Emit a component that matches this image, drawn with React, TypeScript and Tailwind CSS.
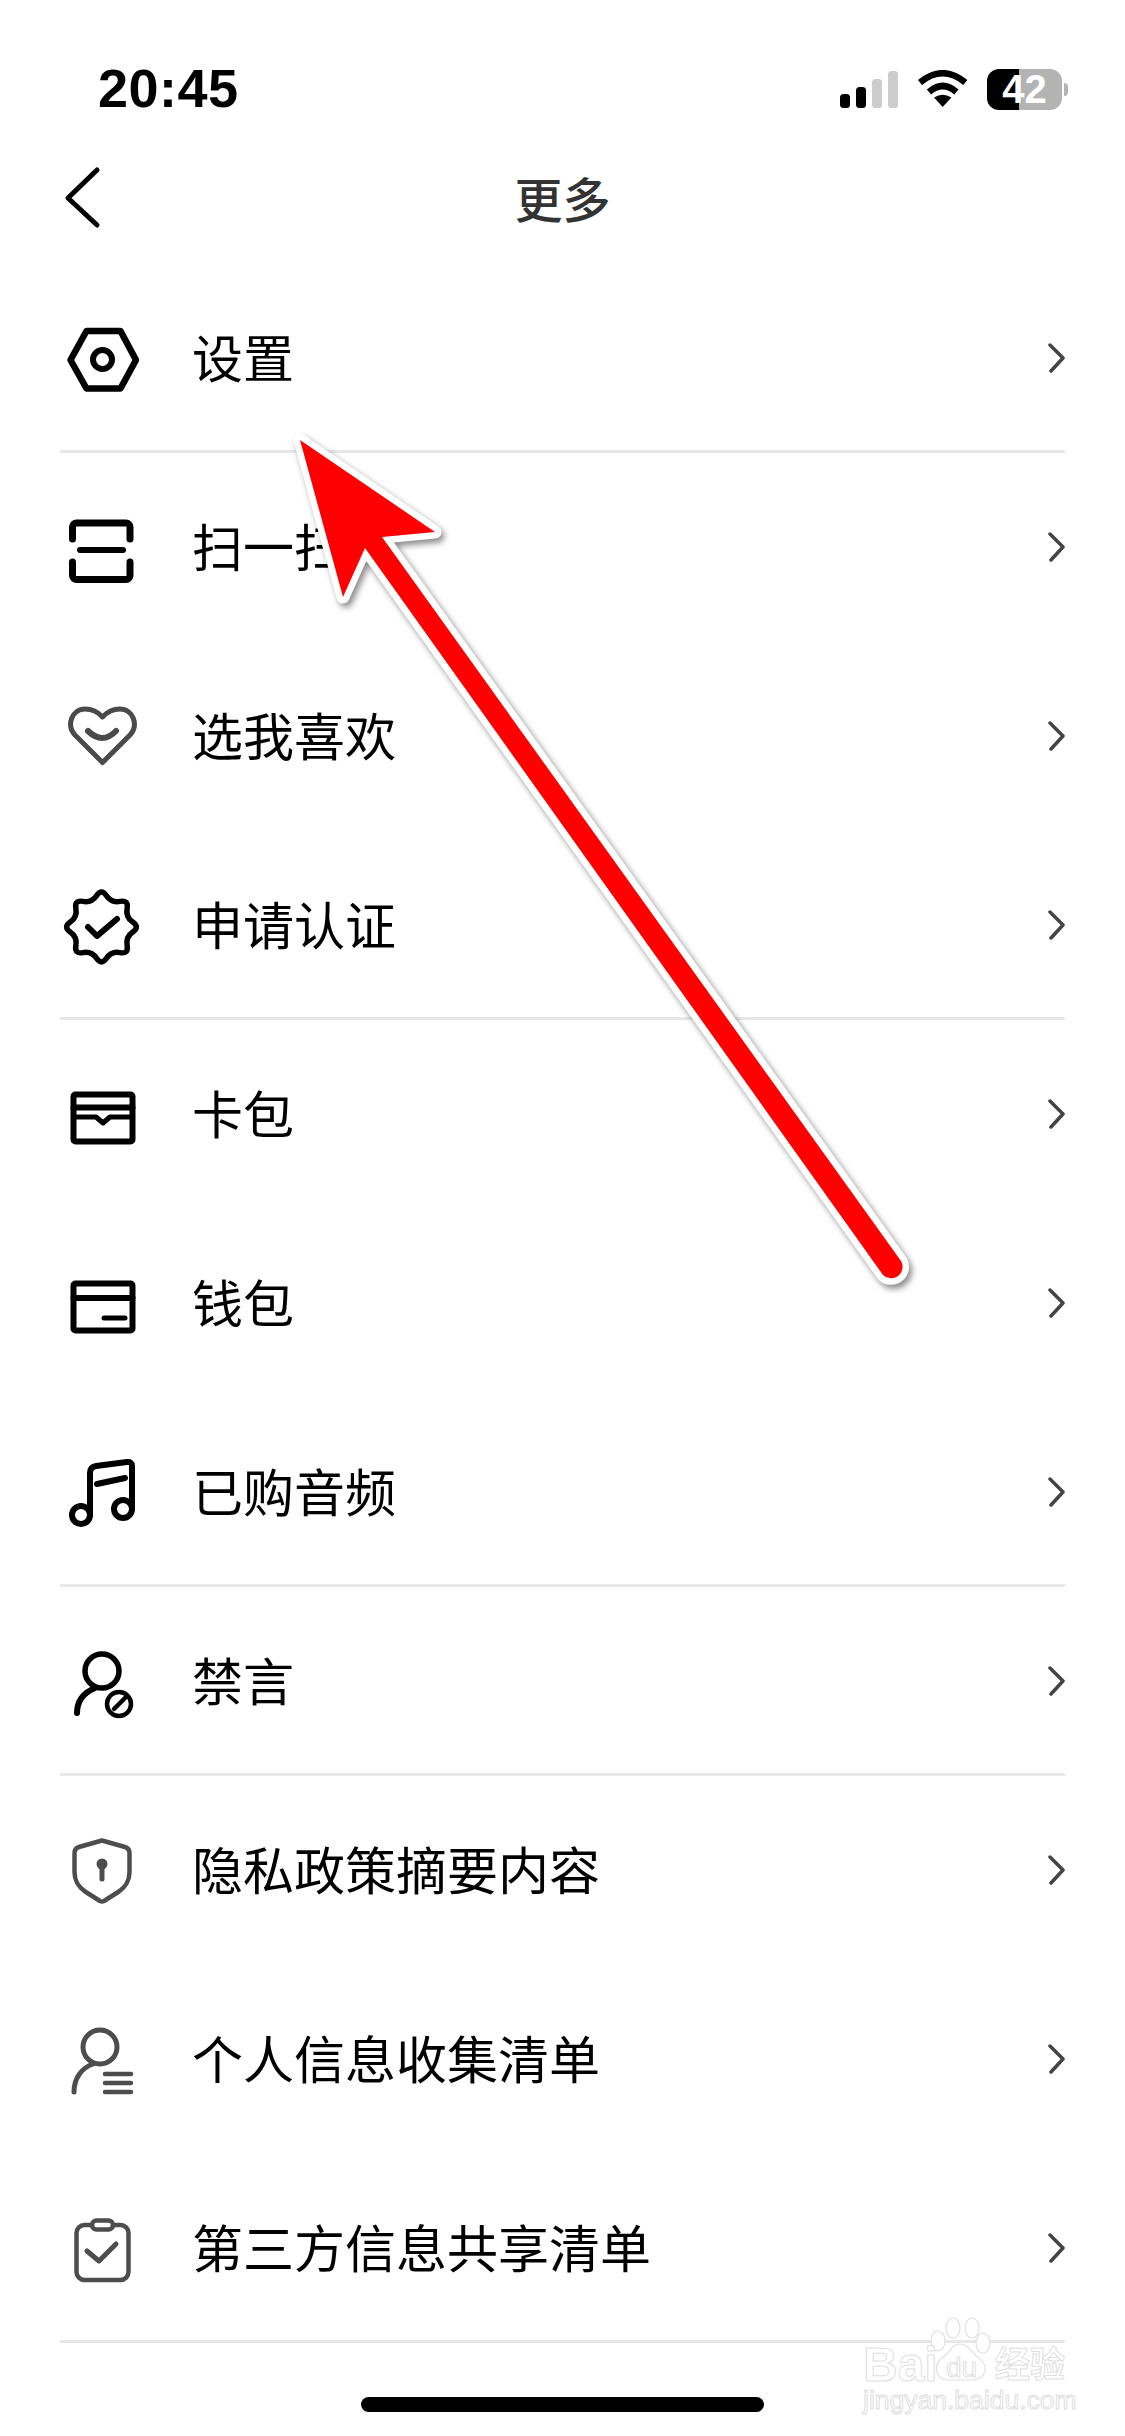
import React from "react";

const cjk = { fontFamily: '"Noto Sans CJK SC", "Noto Sans", sans-serif' };

function badgePath() {
  const cx = 38.5, cy = 40;
  const pts: [number, number][] = [];
  for (let i = 0; i < 16; i++) {
    const a = (i * Math.PI) / 8 - Math.PI / 2;
    const r = i % 2 === 0 ? 38.5 : 26;
    pts.push([cx + r * Math.cos(a), cy + r * Math.sin(a)]);
  }
  const mid = (p: [number, number], q: [number, number]) => [(p[0] + q[0]) / 2, (p[1] + q[1]) / 2];
  const start = mid(pts[15], pts[0]);
  let d = `M${start[0].toFixed(2)} ${start[1].toFixed(2)}`;
  for (let i = 0; i < 16; i++) {
    const m = mid(pts[i], pts[(i + 1) % 16]);
    d += ` Q${pts[i][0].toFixed(2)} ${pts[i][1].toFixed(2)} ${m[0].toFixed(2)} ${m[1].toFixed(2)}`;
  }
  return d + " Z";
}

function Ico({ children, color = "#000", sw = 5.5 }: { children: React.ReactNode; color?: string; sw?: number }) {
  return (
    <svg
      viewBox="0 0 80 80"
      className="w-[80px] h-[80px] shrink-0"
      fill="none"
      stroke={color}
      strokeWidth={sw}
      strokeLinecap="round"
      strokeLinejoin="round"
    >
      {children}
    </svg>
  );
}

const icons: Record<string, React.ReactNode> = {
  hex: (
    <Ico sw={6.5}>
      <path d="M7.5 40 L23.5 11 H57.5 L73 40 L57.5 68.5 H23.5 Z" />
      <circle cx="39.5" cy="39.5" r="9.5" strokeWidth={6} />
    </Ico>
  ),
  scan: (
    <Ico sw={7}>
      <path d="M9.5 30 V18 a4 4 0 0 1 4-4 H63 a4 4 0 0 1 4 4 V30" />
      <path d="M9.5 53 V66.5 a4 4 0 0 0 4 4 H63 a4 4 0 0 0 4-4 V53" />
      <path d="M17 41 H60" strokeWidth={6} />
    </Ico>
  ),
  heart: (
    <Ico color="#4a4a4a" sw={5}>
      <path d="M39.5 64.5 L12 37 C3 27 9 11 22 11 C29 11 35 14 39.5 19 C44 14 50 11 57 11 C70 11 76 27 67 37 Z" />
      <path d="M25 33 Q39.5 47 53 33" strokeWidth={6} />
    </Ico>
  ),
  badge: (
    <Ico sw={5.5}>
      <path d={badgePath()} />
      <path d="M25 40 L34 49 L54 32" strokeWidth={6} />
    </Ico>
  ),
  card: (
    <Ico sw={6}>
      <rect x="10.5" y="18.5" width="59" height="47" rx="2" />
      <path d="M10.5 31.5 H69.5" />
      <path d="M10.5 41 H33 L40 47 L47 41 H69.5" strokeWidth={5} />
    </Ico>
  ),
  wallet: (
    <Ico sw={6}>
      <rect x="10.5" y="18.5" width="59" height="47" rx="2" />
      <path d="M10.5 33 H69.5" />
      <path d="M41 53 H62" strokeWidth={5} />
    </Ico>
  ),
  music: (
    <Ico sw={6}>
      <circle cx="18" cy="61" r="9" />
      <circle cx="60" cy="55" r="9" />
      <path d="M27 61 V19 q0 -6 6 -7 L64 8 q5 -0.5 5 4 V55" />
      <path d="M34 30 L62 24" />
    </Ico>
  ),
  ban: (
    <Ico sw={5.5}>
      <circle cx="39" cy="28" r="17" />
      <path d="M14 70 C14 58 20 50 32 45" strokeWidth={6} />
      <circle cx="56" cy="61" r="12" strokeWidth={4.5} />
      <path d="M51 66 L62 55" strokeWidth={4.5} />
    </Ico>
  ),
  shield: (
    <Ico color="#4d4d4d" sw={4.5}>
      <path d="M39 8.5 L62 15 q4.5 1.5 4.5 6 V40 C66.5 50 62 55 56 59.5 L41 69 q-2 1 -4 0 L22 59.5 C16 55 11.5 50 11.5 40 V21 q0 -4.5 4.5 -6 Z" />
      <circle cx="39" cy="32" r="5.5" fill="#4d4d4d" stroke="none" />
      <path d="M39 34 V47" strokeWidth={5} />
    </Ico>
  ),
  list: (
    <Ico color="#4d4d4d" sw={5}>
      <circle cx="37" cy="26" r="17" />
      <path d="M11 71 C11 58 18 47 30 43" />
      <path d="M42 53 H68" strokeWidth={4.5} />
      <path d="M42 62 H68" strokeWidth={4.5} />
      <path d="M42 71 H68" strokeWidth={4.5} />
    </Ico>
  ),
  clip: (
    <Ico color="#4d4d4d" sw={4.5}>
      <rect x="13.5" y="15" width="52" height="55" rx="8" />
      <rect x="29" y="10.5" width="21" height="9" rx="4.5" fill="#fff" />
      <path d="M24 41 L36 51 L53 34" strokeWidth={5} />
    </Ico>
  ),
};

const rows: { icon: string; label: string; line?: boolean }[] = [
  { icon: "hex", label: "设置", line: true },
  { icon: "scan", label: "扫一扫" },
  { icon: "heart", label: "选我喜欢" },
  { icon: "badge", label: "申请认证", line: true },
  { icon: "card", label: "卡包" },
  { icon: "wallet", label: "钱包" },
  { icon: "music", label: "已购音频", line: true },
  { icon: "ban", label: "禁言", line: true },
  { icon: "shield", label: "隐私政策摘要内容" },
  { icon: "list", label: "个人信息收集清单" },
  { icon: "clip", label: "第三方信息共享清单", line: true },
];

function Row({ icon, label, line }: { icon: string; label: string; line?: boolean }) {
  return (
    <div
      className={`mx-[60px] h-[189px] box-border pt-[6px] pl-[3px] flex items-center gap-[49px] border-b-[3px] ${
        line ? "border-[#e8e8e8]" : "border-transparent"
      }`}
    >
      {icons[icon]}
      <span className="text-[51px] leading-none text-black mb-[7px]" style={cjk}>
        {label}
      </span>
      <svg viewBox="0 0 20 34" className="w-[20px] h-[34px] ml-auto -mt-[3px]" fill="none" stroke="#444" strokeWidth={3.5} strokeLinecap="round" strokeLinejoin="round">
        <path d="M5 3 L18 16 L6 29" />
      </svg>
    </div>
  );
}

function Watermark() {
  const stroke = "text-white [-webkit-text-stroke:1px_#e0e0e0]";
  return (
    <div className="absolute left-[863px] top-[2317px] w-[204px] h-[96px] font-['Liberation_Sans',sans-serif]">
      <svg viewBox="0 0 204 70" className="absolute left-0 top-0 w-[204px] h-[70px]" fill="#fff" stroke="#e0e0e0" strokeWidth={1.2}>
        <ellipse cx="90" cy="11" rx="7" ry="10" />
        <ellipse cx="109" cy="11" rx="7" ry="10" />
        <ellipse cx="75" cy="24" rx="7" ry="10" />
        <ellipse cx="120" cy="26" rx="7" ry="10" />
        <path d="M97 27 C106 27 108 36 116 41 C126 48 124 63 108 63 H86 C72 63 70 48 79 41 C87 36 88 27 97 27 Z" />
      </svg>
      <span className={`absolute left-0 top-[26px] text-[48px] leading-[44px] font-bold ${stroke}`}>Bai</span>
      <span className={`absolute left-[83px] top-[37px] text-[28px] leading-none ${stroke}`}>du</span>
      <span className={`absolute left-[132px] top-[27px] text-[35px] leading-none font-bold ${stroke}`} style={cjk}>
        经验
      </span>
      <span className={`absolute left-0 top-[70px] text-[26.5px] leading-none ${stroke}`}>jingyan.baidu.com</span>
    </div>
  );
}

export default function App() {
  return (
    <div className="relative w-[1125px] h-[2436px] bg-white overflow-hidden">
      <div className="h-[132px] pt-[44px] pl-[98px] pr-[57px] flex items-center justify-between">
        <span className="text-[54px] leading-none font-bold text-black tracking-[0.5px] font-['Liberation_Sans',sans-serif]">20:45</span>
        <div className="flex items-center mt-[2px]">
          <svg viewBox="0 0 58 37" className="w-[58px] h-[37px]" fill="#000">
            <rect x="0" y="23" width="10" height="14" rx="3.5" />
            <rect x="16" y="16" width="10" height="21" rx="3.5" />
            <rect x="32" y="8" width="10" height="29" rx="3.5" fill="#ccc" />
            <rect x="48" y="0" width="10" height="37" rx="3.5" fill="#ccc" />
          </svg>
          <svg viewBox="0 0 52 38" className="w-[52px] h-[38px] ml-[19px]" fill="none" stroke="#000" strokeWidth={6.5}>
            <path d="M3 12.5 Q25.7 -6 48.3 12.5" />
            <path d="M12 22 Q25.7 10 39.4 22" />
            <path d="M25.7 37 L17 27.5 Q25.7 22 34.4 27.5 Z" fill="#000" stroke="none" />
          </svg>
          <div className="ml-[18px] w-[75px] h-[41px] rounded-[12px] bg-[linear-gradient(90deg,#000_43%,#b3b3b3_43%)] flex items-center justify-center text-white text-[40px] font-bold leading-none font-['Liberation_Sans',sans-serif]">
            42
          </div>
          <div className="ml-[2px] w-[4px] h-[13px] rounded-r-full bg-[#b3b3b3]" />
        </div>
      </div>
      <div className="h-[132px] grid grid-cols-[1fr_auto_1fr] items-center">
        <svg viewBox="0 0 40 64" className="w-[40px] h-[64px] ml-[62px] -mt-[2px]" fill="none" stroke="#000" strokeWidth={5} strokeLinecap="round" strokeLinejoin="round">
          <path d="M35 5 L6 33 L35 60" />
        </svg>
        <span className="text-[48px] leading-none font-medium text-[#333] mb-[3px]" style={cjk}>
          更多
        </span>
        <span />
      </div>
      <div>
        {rows.map((r) => (
          <Row key={r.label} {...r} />
        ))}
      </div>
      <div className="mt-[54px] mx-auto w-[403px] h-[15px] rounded-full bg-black" />
      <Watermark />
      <svg viewBox="0 0 1125 2436" className="absolute inset-0 w-[1125px] h-[2436px] pointer-events-none drop-shadow-[3px_4px_3px_rgba(0,0,0,0.45)]">
        <path
          d="M300 440 L435 532 L382 537 L901 1261 A11.5 11.5 0 0 1 883 1275 L365 548 L343 597 Z"
          fill="#ff0000"
          stroke="#fff"
          strokeWidth={13}
          strokeLinejoin="round"
          paintOrder="stroke"
        />
      </svg>
    </div>
  );
}
